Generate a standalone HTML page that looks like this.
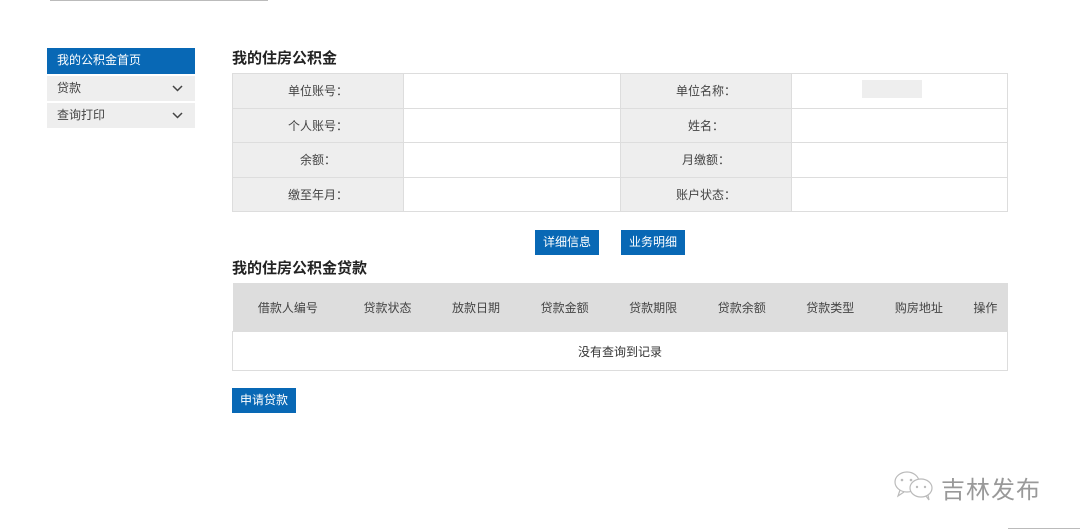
<!DOCTYPE html><html><head><meta charset="utf-8"><style>
body{margin:0;width:1080px;height:532px;background:#fff;font-family:"Liberation Sans","Noto Sans CJK SC",sans-serif;font-size:12px;color:#333;position:relative;overflow:hidden}
.a{position:absolute}
.side div{position:absolute;left:47px;width:148px;height:25px;line-height:25px;background:#eee;padding-left:10px;box-sizing:border-box;color:#444}
.side div svg{position:absolute;right:12px;top:9px}
h2{position:absolute;margin:0;font-size:15px;font-weight:bold;color:#222}
table{border-collapse:collapse;position:absolute}
.t1 td{border:1px solid #ddd;height:33.5px;padding:0;text-align:center;color:#444}
.t1 td.l{background:#eee}
.btn{position:absolute;background:#0868b5;color:#fff;height:25px;line-height:25px;text-align:center;width:64px}
.t2 th{background:#ddd;font-weight:normal;height:48px;color:#444;padding:0}
.t2 td{border:1px solid #ddd;height:38px;padding:0;text-align:center;color:#333}
</style></head><body>
<div class="a" style="left:50px;top:0;width:218px;height:1px;background:#bbb"></div>
<div class="side">
<div style="top:48px;background:#0868b5;color:#fff;height:26px">我的公积金首页</div>
<div style="top:76px">贷款<svg width="11" height="7"><path d="M1 1L5.5 5.5L10 1" stroke="#444" stroke-width="1.5" fill="none"/></svg></div>
<div style="top:103px">查询打印<svg width="11" height="7"><path d="M1 1L5.5 5.5L10 1" stroke="#444" stroke-width="1.5" fill="none"/></svg></div>
</div>
<h2 style="left:232px;top:47px">我的住房公积金</h2>
<table class="t1" style="left:232px;top:73px;width:776px">
<tr><td class="l" style="width:170px">单位账号：</td><td style="width:216px"></td><td class="l" style="width:170px">单位名称：</td><td></td></tr>
<tr><td class="l">个人账号：</td><td></td><td class="l">姓名：</td><td></td></tr>
<tr><td class="l">余额：</td><td></td><td class="l">月缴额：</td><td></td></tr>
<tr><td class="l">缴至年月：</td><td></td><td class="l">账户状态：</td><td></td></tr>
</table>
<div class="a" style="left:862px;top:80px;width:60px;height:18px;background:#eee"></div>
<div class="btn" style="left:535px;top:230px">详细信息</div>
<div class="btn" style="left:621px;top:230px">业务明细</div>
<h2 style="left:232px;top:257px">我的住房公积金贷款</h2>
<table class="t2" style="left:232px;top:283px;width:776px">
<tr><th>借款人编号</th><th>贷款状态</th><th>放款日期</th><th>贷款金额</th><th>贷款期限</th><th>贷款余额</th><th>贷款类型</th><th>购房地址</th><th>操作</th></tr>
<tr><td colspan="9">没有查询到记录</td></tr>
</table>
<div class="btn" style="left:232px;top:388px">申请贷款</div>
<svg class="a" style="left:892px;top:470px" width="50" height="32"><g fill="none" stroke="#bbb" stroke-width="1.2"><ellipse cx="15" cy="12" rx="12" ry="10"/><path d="M8 20l-2 6 6-4"/><ellipse cx="29" cy="18" rx="11" ry="9" fill="#fff"/><path d="M34 26l3 4-1-5"/></g><g fill="#bbb"><circle cx="10" cy="10" r="1.3"/><circle cx="19" cy="10" r="1.3"/><circle cx="25" cy="17" r="1.2"/><circle cx="33" cy="17" r="1.2"/></g></svg>
<div class="a" style="left:941px;top:470px;font-size:24px;color:#999;letter-spacing:1px">吉林发布</div>
<div class="a" style="left:1008px;top:528px;width:72px;height:1px;background:#bbb"></div>
</body></html>
